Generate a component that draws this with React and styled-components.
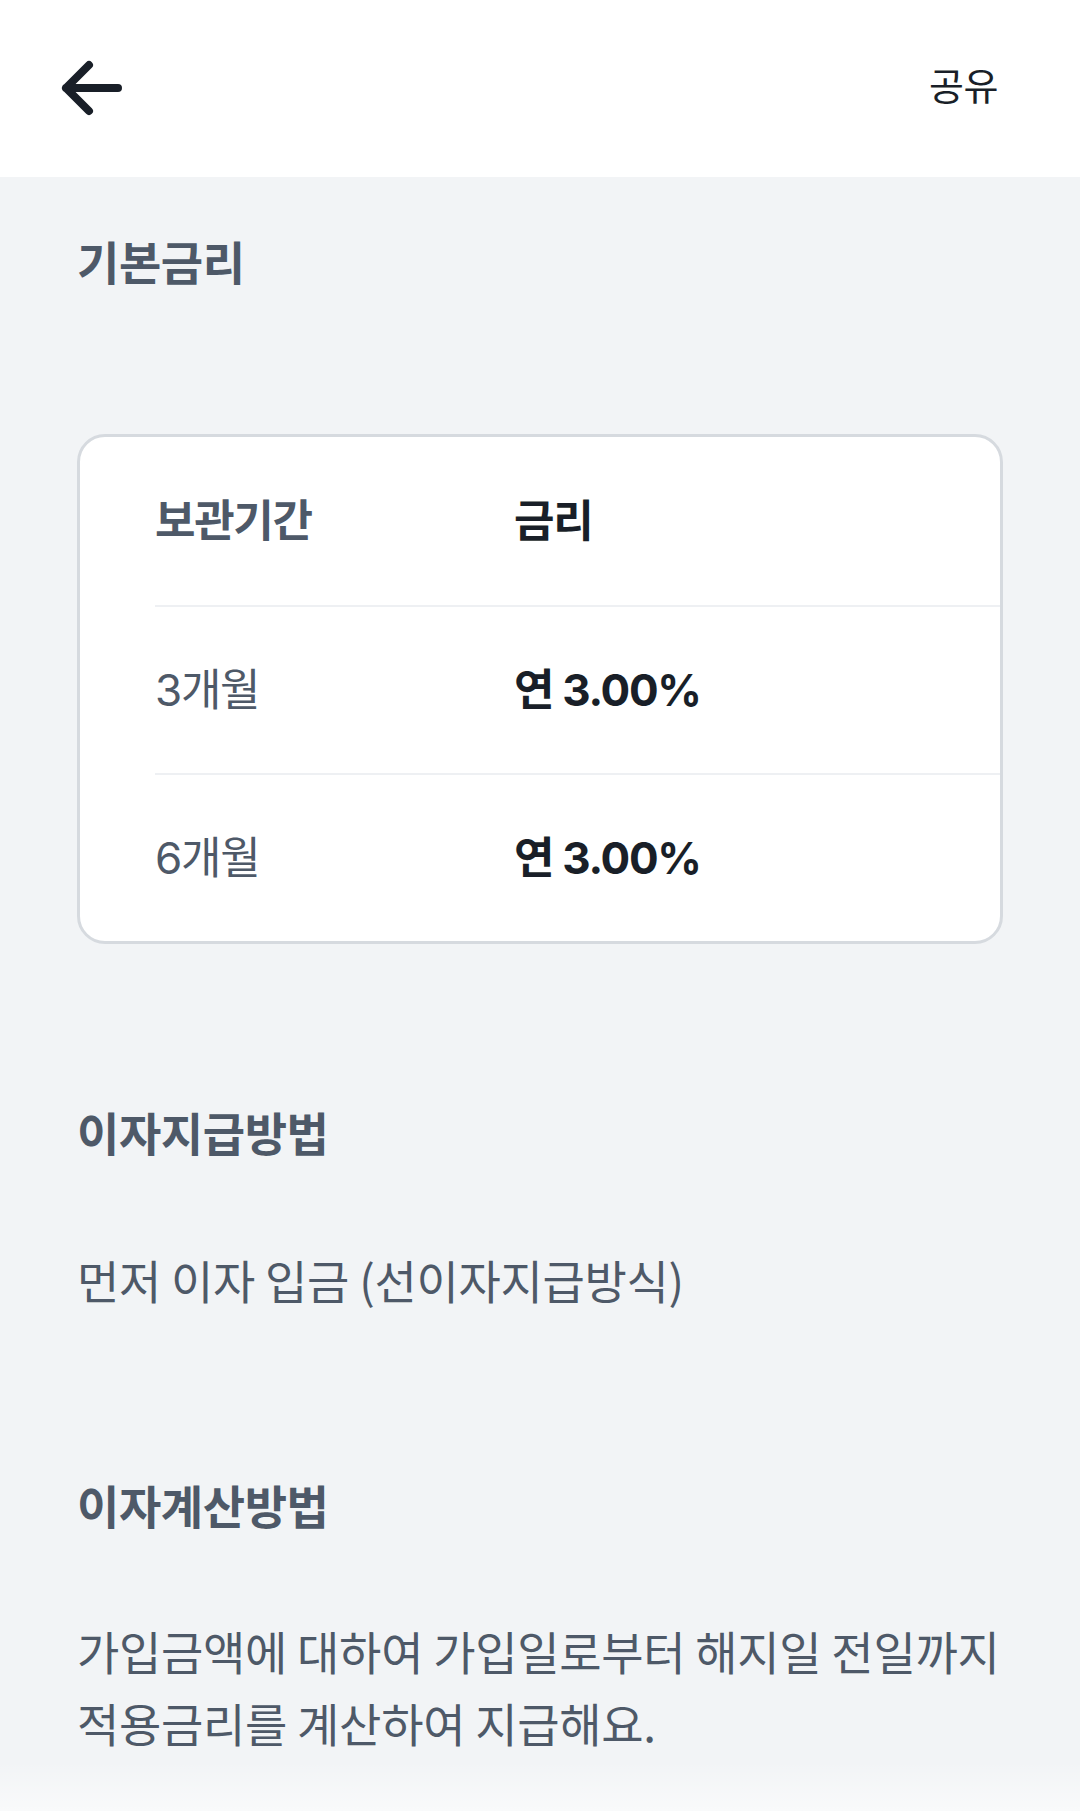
import React from "react";
import styled, { createGlobalStyle } from "styled-components";

const GlobalStyle = createGlobalStyle`
  html, body {
    margin: 0;
    padding: 0;
    background: #f2f4f6;
  }
  body {
    font-family: Inter, "Noto Sans CJK KR", "Noto Sans", sans-serif;
    -webkit-font-smoothing: antialiased;
  }
  * { box-sizing: border-box; }
`;

const Page = styled.div`
  width: 1080px;
  min-height: 1811px;
  display: flex;
  flex-direction: column;
  background: #f2f4f6;
`;

const Header = styled.header`
  height: 177px;
  background: #ffffff;
  display: flex;
  align-items: center;
  justify-content: space-between;
  padding: 0 82px 0 56px;
  flex-shrink: 0;
`;

const BackButton = styled.button`
  width: 72px;
  height: 72px;
  padding: 0;
  margin-bottom: 2px;
  border: 0;
  background: transparent;
  display: flex;
  align-items: center;
  justify-content: center;
`;

const ShareButton = styled.button`
  border: 0;
  background: transparent;
  padding: 0;
  margin-bottom: 10px;
  font-family: "Noto Sans CJK KR", sans-serif;
  font-size: 38px;
  font-weight: 400;
  letter-spacing: -0.5px;
  color: #191f28;
  line-height: 1;
`;

const Main = styled.main`
  flex: 1;
  padding: 50px 77px 0;
  display: flex;
  flex-direction: column;
`;

const SectionTitle = styled.h2`
  margin: ${(p) => p.$top || 0}px 0 0;
  font-family: "Noto Sans CJK KR", sans-serif;
  font-size: 46px;
  font-weight: 700;
  letter-spacing: -0.4px;
  line-height: 66px;
  color: #4e5968;
`;

const Body = styled.p`
  margin: ${(p) => p.$top || 0}px 0 0;
  font-family: "Noto Sans CJK KR", sans-serif;
  font-size: 46px;
  font-weight: 400;
  letter-spacing: -0.3px;
  line-height: 72px;
  color: #4e5968;
  white-space: nowrap;
`;

const Card = styled.div`
  margin-top: 141px;
  background: #ffffff;
  border: 3px solid #d6dadf;
  border-radius: 28px;
  overflow: hidden;
`;

const Row = styled.div`
  height: 168px;
  margin-left: 75px;
  display: grid;
  grid-template-columns: 359px 1fr;
  align-items: center;
  border-top: ${(p) => (p.$first ? "none" : "2px solid #eef0f3")};
`;

const Cell = styled.span`
  font-family: Inter, "Noto Sans CJK KR", sans-serif;
  font-size: 44px;
  font-weight: ${(p) => (p.$bold ? 700 : 400)};
  letter-spacing: -1.3px;
  color: ${(p) => (p.$dark ? "#191f28" : "#4e5968")};
  line-height: 1;
`;

const Fade = styled.div`
  height: 50px;
  flex-shrink: 0;
  background: linear-gradient(rgba(255, 255, 255, 0), rgba(255, 255, 255, 0.55));
`;

const rates = [
  { period: "3개월", rate: "연 3.00%" },
  { period: "6개월", rate: "연 3.00%" },
];

function BackArrow() {
  return (
    <svg width="72" height="72" viewBox="0 0 72 72" fill="none">
      <path
        d="M62 36H10M33 13L10 36L33 59"
        stroke="#191f28"
        strokeWidth="8"
        strokeLinecap="round"
        strokeLinejoin="round"
      />
    </svg>
  );
}

export default function App() {
  return (
    <Page>
      <GlobalStyle />
      <Header>
        <BackButton aria-label="뒤로">
          <BackArrow />
        </BackButton>
        <ShareButton>공유</ShareButton>
      </Header>
      <Main>
        <SectionTitle>기본금리</SectionTitle>
        <Card>
          <Row $first>
            <Cell $bold>보관기간</Cell>
            <Cell $bold $dark>금리</Cell>
          </Row>
          {rates.map((r) => (
            <Row key={r.period}>
              <Cell>{r.period}</Cell>
              <Cell $bold $dark>{r.rate}</Cell>
            </Row>
          ))}
        </Card>
        <SectionTitle $top={154}>이자지급방법</SectionTitle>
        <Body $top={79}>먼저 이자 입금 (선이자지급방식)</Body>
        <SectionTitle $top={156}>이자계산방법</SectionTitle>
        <Body $top={77}>
          가입금액에 대하여 가입일로부터 해지일 전일까지
          <br />
          적용금리를 계산하여 지급해요.
        </Body>
      </Main>
      <Fade />
    </Page>
  );
}
